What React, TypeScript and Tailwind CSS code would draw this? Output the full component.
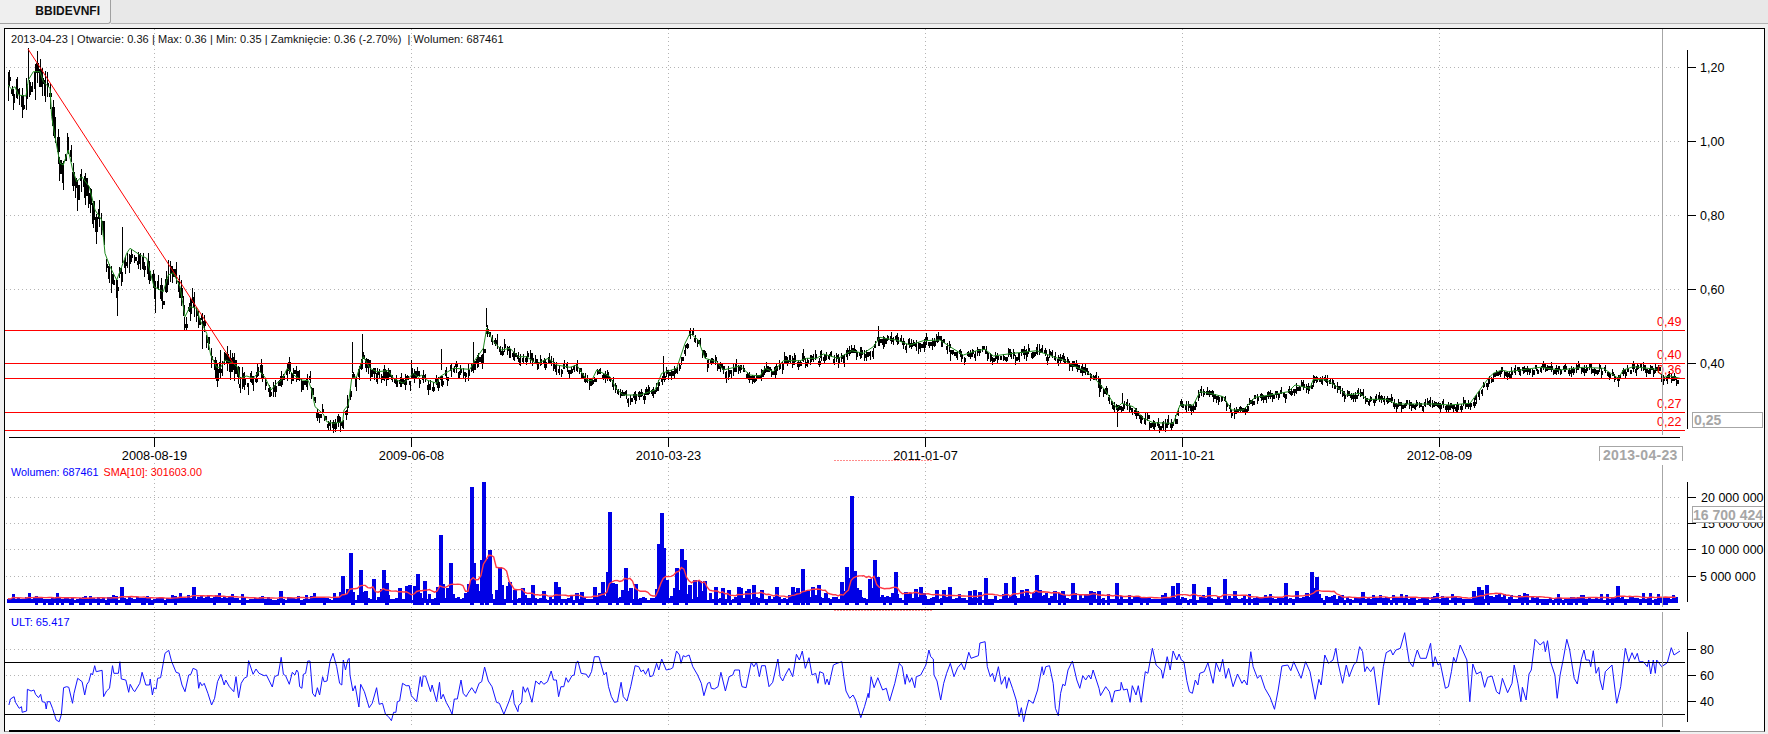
import React from "react";

const Z5 = [24,165,35,178,45,170,55,195,78,198,85,150,100,125,120,125,130,155,150,175,155,260,165,320,180,400,190,405,205,360,218,420,230,455,245,440,268,470,285,540,305,570,315,670,330,710,350,750,365,710,380,670,390,655,420,675,440,685,462,770,490,785,505,735,520,728,540,770,555,860,570,830,590,835];
const Z7 = [0,90,20,130,32,195,50,232,62,232,75,210,100,220,112,230,120,265,140,258,160,265,178,243,195,262,213,300,230,280,245,270,262,235,285,258,305,270,325,272,335,300,345,350,370,372,380,395,400,400,428,395,432,360,445,345,455,265,470,260,490,200,510,235,530,245,565,242,580,265,610,280,625,265,640,250,655,262,665,255,680,270,710,280,720,260,760,235,810,238,825,210,850,175,860,115,880,155,905,180,930,175,955,200,980,200,1010,222,1045,205,1070,225,1110,232,1130,225,1160,270,1175,272,1190,240,1230,260,1250,298,1270,315,1320,315,1365,300,1385,250,1430,235,1455,160,1470,130,1495,150];
const Z8 = [0,165,15,205,50,215,70,240,120,228,150,255,180,258,195,235,220,245,250,212,300,212,320,205,350,205,370,192,415,205,455,182,490,190,520,170,540,142,570,148,590,150,630,165,670,152,720,150,750,170,790,195,830,182,855,178,880,198,940,190,1010,182,1060,200,1095,212,1115,225,1160,245,1190,272,1215,300,1250,355,1265,340,1300,350,1330,385,1360,398,1420,400];
const Z9 = [0,345,40,345,60,305,90,310,130,320,155,360,190,360,225,322,270,315,325,305,345,285,390,295,400,268,440,270,470,290,500,315,540,310,560,328,620,328,650,342,760,342,810,345,870,340,925,265,940,250,965,240,985,245,1080,232,1140,240,1210,232,1270,235,1300,255,1315,265,1330,240,1360,230,1430,238,1450,262,1470,258,1500,265];

function pairs(a: number[], x0: number, sx: number, y0: number, sy = 3): [number, number][] {
  const out: [number, number][] = [];
  for (let i = 0; i < a.length; i += 2) out.push([x0 + a[i] / sx, y0 + a[i + 1] / sy]);
  return out;
}

const sma: [number, number][] = [
  ...pairs(Z5, 0, 3, 30),
  ...pairs(Z7, 200, 3, 290),
  ...pairs(Z8, 700, 3, 290),
  ...pairs(Z9, 1180, 3, 290),
];

const U10 = [24,240,28,222,38,215,42,232,52,250,58,245,60,262,72,258,74,193,84,198,92,195,96,208,104,218,110,208,114,230,122,232,125,252,128,230,135,230,142,250,152,285,160,290,166,268,172,188,180,185,186,187,196,235,200,205,210,160,222,170,229,210,235,178,240,170,246,145,250,150,256,122,260,140,276,136,280,215,288,198,296,190,304,122,308,145,320,145,324,110,328,162,340,165,348,202,352,178,360,195,364,200,378,175,384,142,394,180,404,180,406,162,412,210,416,188,422,192,426,160,434,158,446,85,456,76,464,110,476,142,484,145,492,180,500,200,510,150,516,148,522,130,532,135,537,190,541,172,546,182,552,175,562,205,572,240,580,220,588,170,597,148,606,180,610,165,620,185,632,200,638,155,645,218,652,175,660,160,668,155,672,107,684,148,692,132,700,145,714,152,720,150,736,186,742,155,752,150,760,97,766,148,772,152,782,178,790,142,797,150,802,135,806,142,810,185,816,190,820,148,826,145,832,108,838,108,845,205,852,215,858,188,864,210,872,155,876,170,884,168,892,110,900,85,910,125,918,175,924,180,928,105,934,135,940,105,944,100,946,150,954,198,960,182,970,246,975,178,985,200,998,248,1006,235,1018,188,1025,238,1034,235,1042,268,1050,275,1058,287,1064,262,1070,262,1074,230,1080,228,1088,175,1098,182,1106,182,1112,212,1126,230,1136,155,1140,185,1144,153,1150,153,1164,200,1168,180,1180,230,1188,172,1192,222,1198,208,1206,232,1215,250,1222,268,1228,222,1236,222,1246,165,1252,205,1260,215,1265,205,1275,188,1285,205,1295,175,1302,170,1310,126,1320,168,1330,185,1342,232,1350,235,1362,268,1376,228,1386,195,1390,235,1400,260,1402,242,1410,232,1414,185,1420,202,1426,188,1438,232,1448,168,1458,178,1462,168,1470,178,1480,170,1490,138,1496,165,1504,165,1510,215,1516,185,1524,185,1530,158,1536,172,1546,152,1552,150,1558,112,1562,108];
const U11 = [30,145,44,148,50,158,58,140,66,95,78,95,92,150,98,142,104,185,112,215,120,232,128,230,138,172,144,215,154,228,164,185,176,122,186,125,192,140,198,135,204,148,212,130,216,155,224,152,234,115,240,135,248,102,260,135,272,132,278,128,288,78,296,90,300,115,306,92,312,95,322,90,332,125,345,150,355,175,362,212,372,175,378,172,382,190,390,192,400,185,408,142,420,198,430,155,440,150,445,135,458,135,460,160,465,185,476,188,490,112,497,125,504,112,512,155,518,122,528,122,538,185,548,172,562,102,568,155,575,168,582,150,592,130,602,155,612,88,620,105,628,78,636,130,646,98,654,150,664,145,670,175,675,140,685,145,690,178,695,162,700,180,705,155,712,120,722,115,735,110,740,155,746,198,756,220,765,210,772,225,786,278,796,245,806,205,808,218,814,155,822,188,832,158,845,195,855,190,864,228,878,175,890,115,898,125,906,178,910,148,918,172,924,158,932,188,936,155,948,150,962,120,970,75,975,95,982,102,984,150,992,168,1002,225,1010,175,1018,145,1028,115,1038,155,1048,128,1058,115,1066,135,1078,82,1084,100,1104,92,1108,54,1122,50,1128,125,1136,155,1142,145,1148,170,1158,125,1166,178,1176,155,1180,190,1186,158,1196,190,1206,225,1214,275,1220,248,1226,290,1232,258,1240,225,1252,235,1264,195,1276,125,1280,150,1286,125,1296,122,1306,175,1312,250,1320,272,1326,205,1332,178,1338,182,1346,135,1358,108,1370,165,1378,190,1386,152,1394,165,1402,150,1408,162,1414,135,1430,190,1434,212,1448,185,1458,200,1465,232,1472,198,1488,195,1490,172,1496,195,1506,192,1514,232,1520,182,1530,210,1536,182,1544,232,1555,140,1562,145];
const U12 = [412,535,422,585,436,600,440,625,452,560,460,600,468,543,478,570,484,552,490,570,497,575,505,632,512,665,520,670,528,630,535,645,540,610,552,605,562,578,576,640,584,578,594,605,602,568,610,625,618,595,630,650,642,612,654,640,660,630,668,645,678,545,684,590,696,625,704,615,716,655,730,682,742,718,752,660,762,588,778,585,786,602,794,575,814,625,826,575,838,605,852,688,862,628,868,645,878,555,888,580,900,570,908,535,914,580,926,640,936,585,944,620,956,585,964,575,972,530,980,545,986,605,992,590,1002,605,1010,590,1024,705,1036,590,1044,548,1056,540,1062,555,1070,540,1082,535,1094,488,1106,575,1116,590,1122,562,1128,540,1136,565,1152,565,1164,520,1170,590,1176,560,1184,585,1190,580,1204,655,1212,650,1220,605,1226,562,1232,578,1244,525,1262,570,1270,695,1278,582,1288,612,1300,605,1310,652,1318,622,1330,618,1342,665,1350,672,1358,625,1372,668,1384,640,1390,585,1400,640,1408,695,1412,652,1422,690,1430,612,1436,600,1446,508,1460,525,1470,515,1474,545,1480,512,1488,575,1500,615,1506,685,1514,615,1522,570,1532,508,1540,540,1552,625];
const U3 = [592,642,604,568,612,540,618,570,628,570,632,590,640,542,648,610,656,592,660,630,668,660,676,605,696,585,710,700,722,650,736,535,746,575,756,548,764,568,772,550,778,575,790,575,802,590,806,570,812,612,820,570,826,610,830,570,845,590,862,578,874,533,882,555,900,543];

const ult = [
  ...pairs(U10, 0, 2.703, 625),
  ...pairs(U11, 570, 2.703, 625),
  ...pairs(U12, 1000, 2.703, 470),
  ...pairs(U3, 1380, 3, 470),
];

const toPoints = (p: [number, number][]) => p.map(([x, y]) => `${x.toFixed(1)},${y.toFixed(1)}`).join(" ");

function mulberry(seed: number) {
  let a = seed;
  return () => {
    a |= 0;
    a = (a + 0x6d2b79f5) | 0;
    let t = Math.imul(a ^ (a >>> 15), 1 | a);
    t = (t + Math.imul(t ^ (t >>> 7), 61 | t)) ^ t;
    return ((t ^ (t >>> 14)) >>> 0) / 4294967296;
  };
}

function interp(x: number) {
  if (x <= sma[0][0]) return sma[0][1];
  for (let i = 1; i < sma.length; i++) {
    if (x <= sma[i][0]) {
      const [x0, y0] = sma[i - 1];
      const [x1, y1] = sma[i];
      return y0 + ((y1 - y0) * (x - x0)) / Math.max(x1 - x0, 0.01);
    }
  }
  return sma[sma.length - 1][1];
}

const STEP = 2.57;
const N = Math.floor((1680 - 8) / STEP);

function amp(x: number) {
  if (x < 100) return 22;
  if (x < 260) return 17;
  if (x < 520) return 11;
  if (x < 900) return 8.5;
  if (x < 1000) return 8;
  if (x < 1200) return 8;
  return 6.5;
}

const rect = (x: number, y0: number, y1: number, w: number) =>
  `M${x} ${Math.round(y0)}h${w}V${Math.round(y1)}h${-w}z`;

function buildCandles() {
  const r = mulberry(7);
  let d = "";
  for (let i = 0; i < N; i++) {
    const x = 8 + i * STEP;
    const px = Math.round(x);
    const cy = interp(x);
    const a = amp(x);
    const c = cy + (r() - 0.3) * a;
    const h = Math.max(4, r() * a * 0.85);
    const top = c - h / 2;
    const bot = c + h / 2;
    d += rect(px, top, bot, r() > 0.55 ? 3 : 2);
    d += rect(px + (r() > 0.5 ? 1 : 0), top - r() * a * 0.55, bot + r() * a * 0.55, 1);
  }
  const extra = [
    ...[[352,750,857],[365,590,700],[200,310,360],[185,400,458],[465,770,848],[552,860,900],[605,870,958],[650,1015,1070],[575,775,820],[275,520,582],[225,450,503],[505,690,730],[660,960,1000],[85,55,150],[25,125,213]].map(([a, b, c]) => [a / 3, 30 + b / 3, 30 + c / 3]),
    ...[[455,155,250],[487,133,230],[858,55,110],[722,178,240],[818,155,215],[632,210,260],[1388,198,270],[1520,210,245]].map(([a, b, c]) => [200 + a / 3, 290 + b / 3, 290 + c / 3]),
    ...[[1250,345,410],[1265,310,340],[1198,280,322],[750,180,212],[535,108,140],[708,132,155],[310,178,215]].map(([a, b, c]) => [700 + a / 3, 290 + b / 3, 290 + c / 3]),
    ...[[162,365,388],[1315,265,290],[400,255,290]].map(([a, b, c]) => [1180 + a / 3, 290 + b / 3, 290 + c / 3]),
  ];
  for (const [x, a, b] of extra) d += rect(Math.round(x), a, b, 1);
  return d;
}

const V4 = [[1413,322],[1452,306],[1320,465],[1050,520],[1077,570],[1347,550],[1146,570],[1027,588],[1252,582],[1116,598],[1462,510],[1495,562],[1445,575],[360,622],[580,622],[845,633],[82,640],[540,640],[660,640],[1000,640],[1160,610],[1225,615],[1330,612]];
const V6 = [[330,396],[483,400],[471,492],[546,507],[1050,348],[490,505],[318,576],[372,565],[303,606],[24,606],[345,612],[497,600],[530,565],[553,540],[565,615],[600,603],[615,603],[580,600],[908,567],[1119,540],[1104,597],[1131,590],[1182,576],[1038,561],[1020,606],[955,615],[936,621],[831,621],[718,624],[1347,621],[1455,594],[1065,624],[1305,630],[1260,621],[1245,627],[130,633],[240,636],[872,633],[666,624],[783,630],[1410,633]];
const V12 = [[32,320],[95,315],[15,340],[70,357],[105,360],[145,368],[192,338],[245,362],[310,338],[468,348],[477,338],[520,342],[566,350],[604,327],[630,362],[772,338],[800,362],[842,306],[856,320],[848,355],[980,365],[1095,375],[1220,372],[1275,362],[1290,350],[1312,345],[1302,360],[1345,372],[1385,375],[1425,372],[1505,372],[1195,378],[918,378]];
const V3 = [[710,348],[760,380],[895,372],[682,372],[600,375]];

function buildVolume() {
  const r = mulberry(21);
  const hs: number[] = [];
  for (let i = 0; i < N; i++) {
    const x = 8 + i * STEP;
    const boost = x > 340 && x < 800 ? 17 : x > 800 && x < 1100 ? 9 : 5;
    hs.push(2 + r() * 3 + (r() > 0.66 ? r() * boost : 0));
  }
  const put = (x: number, top: number) => {
    const i = Math.round((x - 8) / STEP);
    if (i >= 0 && i < N) {
      const h = 602 - top;
      hs[i] = Math.max(hs[i], h);
      if (h > 25) {
        if (i > 0) hs[i - 1] = Math.max(hs[i - 1], h * (0.15 + r() * 0.25));
        if (i < N - 1) hs[i + 1] = Math.max(hs[i + 1], h * (0.15 + r() * 0.25));
      }
    }
  };
  V4.forEach(([a, b]) => put(a / 3, 380 + b / 3));
  V6.forEach(([a, b]) => put(500 + a / 3, 380 + b / 3));
  V12.forEach(([a, b]) => put(1000 + a / 2.703, 470 + b / 3));
  V3.forEach(([a, b]) => put(1380 + a / 3, 470 + b / 3));
  let d = "";
  const line: [number, number][] = [];
  for (let i = 0; i < N; i++) {
    const x = 8 + i * STEP;
    const px = Math.round(x);
    const h = hs[i];
    d += rect(px - 1, 602 - h, 602 + (r() > 0.7 ? 3 : 1), h > 9 ? 4 : 3);
    let s = 0;
    let c = 0;
    for (let j = Math.max(0, i - 9); j <= i; j++) {
      s += hs[j];
      c++;
    }
    line.push([x, 602 - s / c]);
  }
  return { d, line: toPoints(line) };
}

const candles = buildCandles();
const volume = buildVolume();
const smaPoints = toPoints(sma);

const VX = [154.5, 411.5, 668.5, 925.5, 1182.5, 1439.5];
const DATES = ["2008-08-19", "2009-06-08", "2010-03-23", "2011-01-07", "2011-10-21", "2012-08-09"];

function VGrid({ y1, y2 }: { y1: number; y2: number }) {
  return (
    <>
      {VX.map((x) => (
        <line key={x} x1={x} x2={x} y1={y1} y2={y2} strokeDasharray="1 3" className="stroke-[#b4b4b4]" />
      ))}
    </>
  );
}

function HGrid({ ys }: { ys: number[] }) {
  return (
    <>
      {ys.map((y) => (
        <line key={y} x1={6} x2={1680} y1={y + 0.5} y2={y + 0.5} strokeDasharray="1 3" className="stroke-[#b4b4b4]" />
      ))}
    </>
  );
}

function Axis({ y1, y2, ticks }: { y1: number; y2: number; ticks: [number, string][] }) {
  return (
    <g shapeRendering="crispEdges">
      <line x1={1687.5} x2={1687.5} y1={y1} y2={y2} className="stroke-black" />
      {ticks.map(([y, t]) => (
        <g key={t}>
          <line x1={1688} x2={1696} y1={y + 0.5} y2={y + 0.5} className="stroke-black" />
          <text x={t.length > 9 ? 1701 : 1700} y={y + 5} className="fill-black text-[12.5px]">
            {t}
          </text>
        </g>
      ))}
    </g>
  );
}

function PricePane() {
  const reds: [number, string, number][] = [
    [330.5, "0,49", 325.5],
    [363.5, "0,40", 358.5],
    [378.5, "0,36", 373.5],
    [412.5, "0,27", 407.5],
    [430.5, "0,22", 425.5],
  ];
  return (
    <div className="relative z-10 h-[432px] shrink-0">
      <svg viewBox="5 29 1759 432" className="block h-[432px] w-full overflow-visible">
        <VGrid y1={29} y2={437} />
        <HGrid ys={[67, 141, 215, 289]} />
        <path d={candles} shapeRendering="crispEdges" className="fill-black" />
        <polyline points={smaPoints} className="fill-none stroke-[#1f8a1f] stroke-1" />
        <line x1={28} y1={49} x2={233} y2={363} className="stroke-[#ff0000] stroke-1" />
        <g shapeRendering="crispEdges">
          {reds.map(([y]) => (
            <line key={y} x1={5} x2={1685} y1={y} y2={y} className="stroke-[#ff0000]" />
          ))}
          <line x1={9} x2={1680} y1={437.5} y2={437.5} className="stroke-black" />
          {VX.map((x) => (
            <line key={x} x1={x} x2={x} y1={438} y2={447} className="stroke-black" />
          ))}
        </g>
        {DATES.map((d, i) => (
          <text key={d} x={VX[i]} y={460} textAnchor="middle" className="fill-black text-[12.8px]">
            {d}
          </text>
        ))}
        {reds.map(([, t, b]) => (
          <text key={t} x={1657} y={b} className="fill-[#ff0000] text-[12.5px]">
            {t}
          </text>
        ))}
        <Axis
          y1={50}
          y2={429}
          ticks={[
            [67, "1,20"],
            [141, "1,00"],
            [215, "0,80"],
            [289, "0,60"],
            [363, "0,40"],
          ]}
        />
        <line x1={1662.5} x2={1662.5} y1={29} y2={435} shapeRendering="crispEdges" className="stroke-[#a6a6a6]" />
        <line x1={834} x2={933} y1={460.5} y2={460.5} strokeDasharray="2 1" className="stroke-[#ff8c8c]" />
        <rect x={1692.5} y={412.5} width={70} height={15} shapeRendering="crispEdges" className="fill-white stroke-[#a6a6a6]" />
        <text x={1694} y={425} className="fill-[#a6a6a6] text-[14px] font-bold">
          0,25
        </text>
        <path d="M1599.5 461V446.5H1682.5V461" shapeRendering="crispEdges" className="fill-white stroke-[#a6a6a6]" />
        <text x={1603} y={459.5} className="fill-[#a6a6a6] text-[14px] font-bold tracking-[0.3px]">
          2013-04-23
        </text>
      </svg>
      <div className="absolute left-[6px] top-[3px] whitespace-pre text-[11px] leading-[14px] tracking-[0.06px] text-[#111111]">
        2013-04-23 | Otwarcie: 0.36 | Max: 0.36 | Min: 0.35 | Zamknięcie: 0.36 (-2.70%)  | Wolumen: 687461
      </div>
    </div>
  );
}

function VolumePane() {
  return (
    <div className="relative h-[150px] shrink-0">
      <svg viewBox="5 461 1759 150" className="block h-[150px] w-full">
        <VGrid y1={463} y2={609} />
        <HGrid ys={[497, 523, 549, 576]} />
        <path d={volume.d} shapeRendering="crispEdges" className="fill-[#0000e6]" />
        <polyline points={volume.line} className="fill-none stroke-[#ff3a46] stroke-[1.4px]" />
        <line x1={1662.5} x2={1662.5} y1={465} y2={607} shapeRendering="crispEdges" className="stroke-[#a6a6a6]" />
        <line x1={9} x2={1680} y1={609.5} y2={609.5} shapeRendering="crispEdges" className="stroke-black" />
        <line x1={834} x2={933} y1={610.5} y2={610.5} strokeDasharray="2 1" className="stroke-[#ff8c8c]" />
        <Axis
          y1={482}
          y2={602}
          ticks={[
            [497, "20 000 000"],
            [523, "15 000 000"],
            [549, "10 000 000"],
            [576, "5 000 000"],
          ]}
        />
        <rect x={1692.5} y={506.5} width={72} height={16} shapeRendering="crispEdges" className="fill-white stroke-[#a6a6a6]" />
        <text x={1693} y={519.5} className="fill-[#a6a6a6] text-[14px] font-bold">
          16 700 424
        </text>
      </svg>
      <div className="absolute left-[6px] top-[4px] flex gap-[5px] text-[10.8px] leading-[14px]">
        <span className="text-[#0000ff]">Wolumen: 687461</span>
        <span className="text-[#ff0000]">SMA[10]: 301603.00</span>
      </div>
    </div>
  );
}

function UltPane() {
  return (
    <div className="relative min-h-0 flex-1">
      <svg viewBox="5 611 1759 119" className="block h-[119px] w-full">
        <VGrid y1={612} y2={727} />
        <HGrid ys={[649, 675, 701]} />
        <polyline points={toPoints(ult)} className="fill-none stroke-[#1414ff] stroke-1" />
        <g shapeRendering="crispEdges">
          <line x1={5} x2={1685} y1={662.5} y2={662.5} className="stroke-black" />
          <line x1={5} x2={1685} y1={714.5} y2={714.5} className="stroke-black" />
          <line x1={1662.5} x2={1662.5} y1={612} y2={727} className="stroke-[#a6a6a6]" />
        </g>
        <Axis
          y1={632}
          y2={722}
          ticks={[
            [649, "80"],
            [675, "60"],
            [701, "40"],
          ]}
        />
      </svg>
      <div className="absolute left-[6px] top-[4px] text-[11px] leading-[14px] text-[#0000ff]">ULT: 65.417</div>
      <div className="absolute bottom-[-1px] left-[4px] h-[2px] w-[1671px] bg-black" />
    </div>
  );
}

export default function App() {
  return (
    <div className="flex h-[734px] w-full flex-col overflow-hidden bg-[#f0f0f0] font-['Liberation_Sans',sans-serif]">
      <div className="flex h-[24px] shrink-0">
        <div className="flex w-[111px] items-center justify-end rounded-br-[3px] border-r border-b border-[#a0a0a0] bg-[#efefef] pr-[10px] pb-[2px]">
          <span className="text-[12px] font-bold text-[#111111]">BBIDEVNFI</span>
        </div>
        <div className="flex-1 border-b border-[#b4b4b4] bg-[#e8e8e8]" />
      </div>
      <div className="mt-[4px] ml-[4px] mr-[3px] flex h-[704px] shrink-0 flex-col border border-b-[#9a9a9a] border-black bg-white">
        <PricePane />
        <VolumePane />
        <UltPane />
      </div>
    </div>
  );
}
